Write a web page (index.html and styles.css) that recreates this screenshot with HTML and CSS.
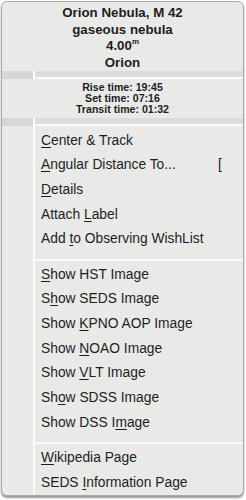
FILE: index.html
```html
<!DOCTYPE html>
<html lang="en">
<head>
    <meta charset="UTF-8">
    <title>Object popup menu</title>
    <link rel="stylesheet" href="styles.css">
</head>
<body>

<div class="popup">
    <div class="head">
        <div>Orion Nebula, M 42</div>
        <div>gaseous nebula</div>
        <div>4.00<sup>m</sup></div>
        <div>Orion</div>
    </div>
    <div class="band"><span class="band-gutter"></span><span class="band-line"></span></div>
    <div class="times">
        <div>Rise time: 19:45</div>
        <div>Set time: 07:16</div>
        <div>Transit time: 01:32</div>
    </div>
    <div class="band"><span class="band-gutter"></span><span class="band-line"></span></div>

    <div class="items">
        <div class="group">
            <div class="item"><u>C</u>enter &amp; Track</div>
            <div class="item"><u>A</u>ngular Distance To... <span class="key">[</span></div>
            <div class="item"><u>D</u>etails</div>
            <div class="item">Attach <u>L</u>abel</div>
            <div class="item">Add <u>t</u>o Observing WishList</div>
        </div>
        <div class="group">
            <div class="item"><u>S</u>how HST Image</div>
            <div class="item">S<u>h</u>ow SEDS Image</div>
            <div class="item">Show <u>K</u>PNO AOP Image</div>
            <div class="item">Show <u>N</u>OAO Image</div>
            <div class="item">Show <u>V</u>LT Image</div>
            <div class="item">Sh<u>o</u>w SDSS Image</div>
            <div class="item">Show DSS I<u>m</u>age</div>
        </div>
        <div class="group">
            <div class="item"><u>W</u>ikipedia Page</div>
            <div class="item">SEDS <u>I</u>nformation Page</div>
        </div>
    </div>
</div>

</body>
</html>
```

FILE: styles.css
```css
/* popup menu */
body {
    margin: 0;
    padding: 1px 2px 4px 1px;
    background: #ffffff;
    font-family: "Liberation Sans", Arial, sans-serif;
    color: #1e1e1e;
}
.popup {
    background: #e9e9e8;
    border: 1px solid #a9a9a9;
    border-radius: 6px;
    box-shadow: 0 2px 2px #9a9a9a;
    overflow: hidden;
}
.head {
    text-align: center;
    font-weight: bold;
    font-size: 13.3px;
    line-height: 16.5px;
    padding: 3px 0 0;
}
.head sup {
    font-size: 8px;
    vertical-align: 6px;
    line-height: 0;
}
.band {
    display: flex;
    height: 8px;
    background: #dcdcdb;
}
.band-gutter {
    width: 31px;
    background: #d7d7d6;
    border-right: 2px solid #fafafa;
}
.band-line {
    flex: 1;
    align-self: flex-end;
    height: 2px;
    background: #fafafa;
}
.times {
    text-align: center;
    font-weight: bold;
    font-size: 10.6px;
    line-height: 11px;
    padding: 3px 0;
}
.items {
    margin-left: 31px;
    border-left: 2px solid #fafafa;
}
.group {
    padding: 2.5px 0 7px;
}
.group + .group {
    border-top: 2px solid #fafafa;
    padding-top: 1.5px;
}
.group:last-child {
    padding-bottom: 0;
}
.item {
    font-size: 13.8px;
    line-height: 24.7px;
    padding-left: 6px;
    white-space: nowrap;
    position: relative;
}
.item u {
    text-decoration-thickness: 1px;
    text-underline-offset: 2px;
}
.key {
    position: absolute;
    left: 183px;
}
```
